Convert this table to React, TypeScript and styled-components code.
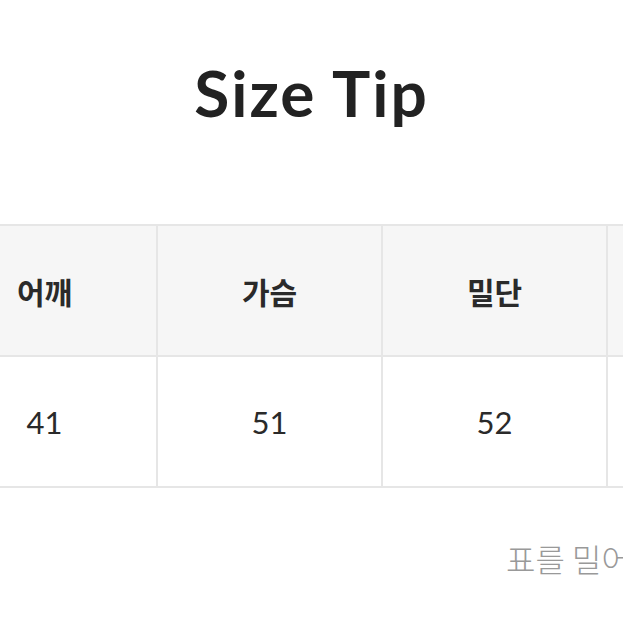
import styled, { createGlobalStyle } from "styled-components";

const GlobalStyle = createGlobalStyle`
  html, body {
    margin: 0;
    padding: 0;
    background: #fff;
  }
  body {
    width: 623px;
    height: 623px;
    overflow: hidden;
    font-family: Lato, "Noto Sans CJK KR", sans-serif;
    color: #222;
  }
`;

const Page = styled.div`
  width: 623px;
  overflow: hidden;
`;

const Title = styled.h2`
  margin: 0;
  padding-top: 55px;
  height: 224px;
  box-sizing: border-box;
  text-align: center;
  font-family: Lato, sans-serif;
  font-weight: 700;
  font-size: 64px;
  letter-spacing: 2px;
  line-height: 76px;
  color: #222;
`;

const TableWrap = styled.div`
  margin-left: -69px;
  width: 1000px;
`;

const Table = styled.table`
  border-collapse: collapse;
  table-layout: fixed;
`;

const HeadCell = styled.th`
  width: 223px;
  height: 129px;
  padding: 0;
  border: 2px solid #e6e6e6;
  background: #f6f6f6;
  font-family: "Noto Sans CJK KR", sans-serif;
  font-weight: 700;
  font-size: 30px;
  color: #2a2a2a;
  text-align: center;
  vertical-align: middle;
`;

const Cell = styled.td`
  height: 129px;
  padding: 0;
  border: 2px solid #e6e6e6;
  background: #fff;
  font-family: Lato, sans-serif;
  font-size: 31px;
  color: #2a2a2a;
  text-align: center;
  vertical-align: middle;
`;

const Hint = styled.p`
  margin: 0;
  padding: 47px 0 0 506px;
  white-space: nowrap;
  font-family: "Noto Sans CJK KR", sans-serif;
  font-weight: 300;
  font-size: 32px;
  color: #999;
`;

const columns = ["어깨", "가슴", "밀단", "총장"];
const values = ["41", "51", "52", "67"];

export default function App() {
  return (
    <>
      <GlobalStyle />
      <Page>
        <Title>Size Tip</Title>
        <TableWrap>
          <Table>
            <thead>
              <tr>
                {columns.map((c) => (
                  <HeadCell key={c}>{c}</HeadCell>
                ))}
              </tr>
            </thead>
            <tbody>
              <tr>
                {values.map((v, i) => (
                  <Cell key={i}>{v}</Cell>
                ))}
              </tr>
            </tbody>
          </Table>
        </TableWrap>
        <Hint>표를 밀어서 확인하세요</Hint>
      </Page>
    </>
  );
}
